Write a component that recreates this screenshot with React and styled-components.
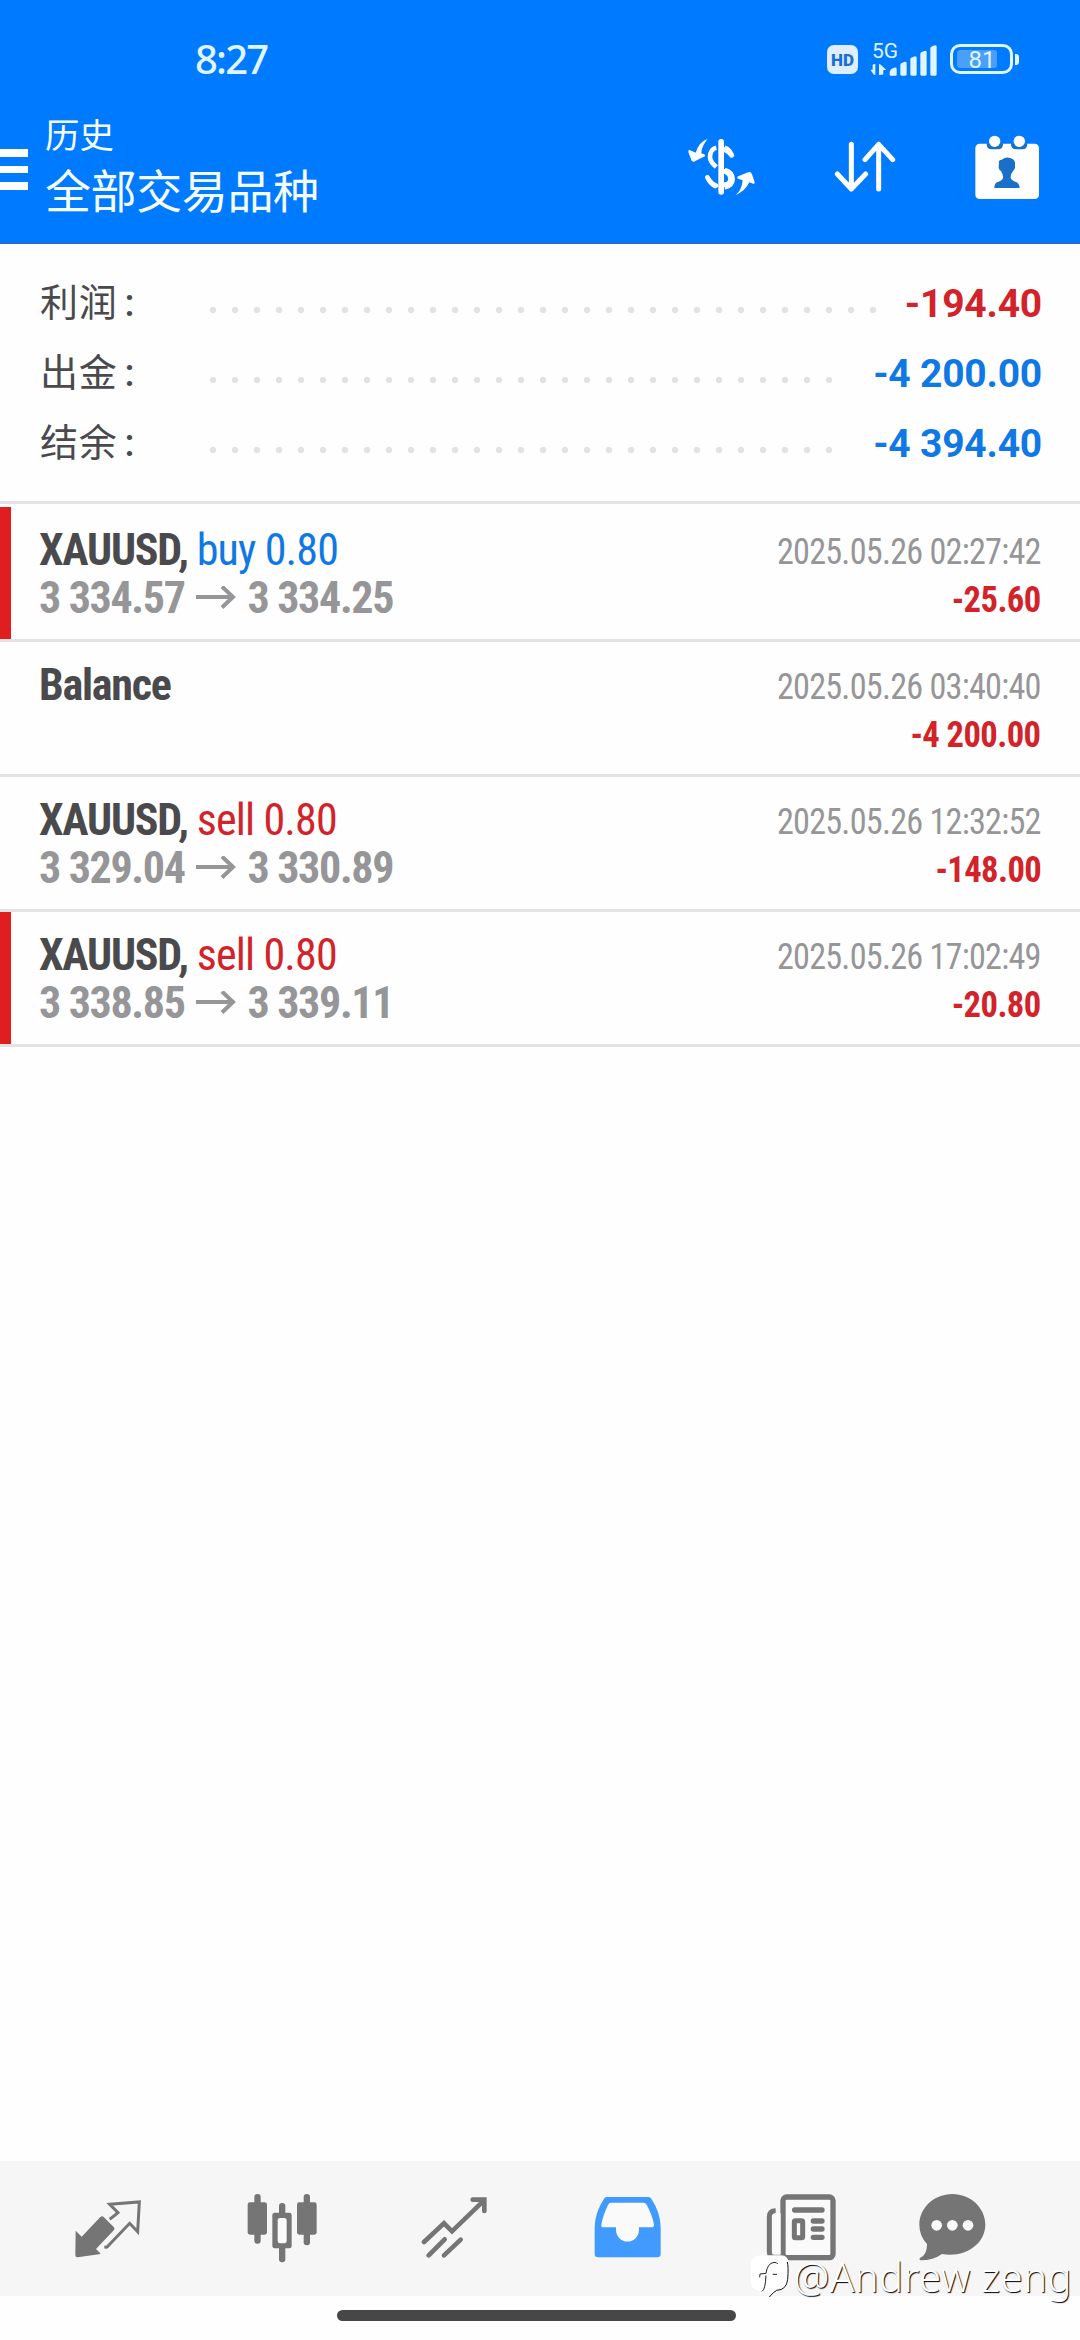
import styled, { createGlobalStyle } from 'styled-components';

const GlobalStyle = createGlobalStyle`
  * {
    box-sizing: border-box;
  }

  body {
    margin: 0;
    background: #ffffff;
    font-family: Roboto, 'Noto Sans CJK SC', sans-serif;
  }

  svg {
    display: block;
    flex: none;
  }
`;

const Screen = styled.div`
  position: relative;
  display: flex;
  flex-direction: column;
  width: 1080px;
  height: 2340px;
  overflow: hidden;
  background: #fefefe;
`;

const Header = styled.header`
  height: 244px;
  background: #007aff;
  border-bottom: 2px solid #1b6fd0;
  color: #f4fdff;
`;

const StatusBar = styled.div`
  display: flex;
  align-items: center;
  justify-content: space-between;
  height: 118px;
  padding: 0 61px 0 195px;
  color: #dff5ff;
`;

const Clock = styled.span`
  font-family: 'Noto Sans', sans-serif;
  font-size: 40px;
  font-weight: 500;
  line-height: 118px;
  letter-spacing: -1.8px;
`;

const StatusIcons = styled.div`
  display: flex;
  align-items: center;
`;

const HdBadge = styled.span`
  width: 31px;
  height: 29px;
  margin-right: 12px;
  border-radius: 7px;
  background: #dfeeff;
  color: #1a6fd4;
  font-size: 17px;
  font-weight: 900;
  line-height: 30px;
  text-align: center;
`;

const Network = styled.div`
  position: relative;
  width: 68px;
  height: 34px;
  margin-right: 12px;
`;

const NetworkType = styled.span`
  position: absolute;
  left: 2px;
  top: -3px;
  font-size: 21px;
  line-height: 24px;
`;

const Battery = styled.div`
  position: relative;
  width: 63px;
  height: 30px;
  padding: 3px 4px;
  border: 3px solid #dff5ff;
  border-radius: 10px;
`;

const BatteryFill = styled.div`
  width: 40px;
  height: 18px;
  border-radius: 3px;
  background: #4a9ffb;
`;

const BatteryLevel = styled.span`
  position: absolute;
  left: 0;
  top: 0;
  width: 58px;
  font-size: 24px;
  line-height: 26px;
  text-align: center;
`;

const BatteryTip = styled.div`
  width: 4px;
  height: 11px;
  margin-left: 2px;
  border-radius: 0 3px 3px 0;
  background: #dff5ff;
`;

const TitleBar = styled.div`
  display: flex;
  height: 124px;
`;

const MenuButton = styled.div`
  display: flex;
  flex-direction: column;
  gap: 9px;
  width: 28px;
  margin-top: 31px;
`;

const MenuLine = styled.div`
  height: 7.5px;
  background: #ffffff;
`;

const Titles = styled.div`
  flex: 1;
  padding: 1px 0 0 17px;
`;

const Caption = styled.div`
  height: 34px;
  font-size: 34.5px;
  line-height: 34px;
`;

const Title = styled.h1`
  margin: 11px 0 0;
  font-size: 46px;
  font-weight: 400;
  line-height: 56px;
  letter-spacing: -0.4px;
`;

const Actions = styled.div`
  display: flex;
  align-items: center;
  gap: 79px;
  height: 98px;
  padding-right: 41px;
`;

const Summary = styled.section`
  height: 257px;
  padding: 23px 38px 0 40px;
`;

const SummaryRow = styled.div`
  display: flex;
  align-items: center;
  height: 70px;
`;

const SummaryLabel = styled.span`
  width: 162px;
  padding-bottom: 5px;
  color: #4a4a4d;
  font-size: 38px;
  letter-spacing: 0.8px;
`;

const Colon = styled.span`
  margin-left: 7px;
  font-weight: 500;
`;

const SummaryLeader = styled.div`
  flex: 1;
  margin-right: 18px;
`;

/* whole 22px cells only, so a dot is never cut in half */
const Dots = styled.div`
  width: round(down, 100%, 22px);
  height: 8px;
  margin-top: 16px;
  background: radial-gradient(circle, #e2e2e2 2.8px, transparent 3.6px) 0 0 / 22px 8px repeat-x;
`;

const SummaryValue = styled.span`
  padding-top: 3px;
  color: ${(props) => (props.$loss ? '#d2232a' : '#0f78e4')};
  font-size: 39px;
  font-weight: 700;
  letter-spacing: -0.2px;
`;

const List = styled.ul`
  margin: 0;
  padding: 0;
  border-top: 3px solid #e3e3e3;
  list-style: none;
`;

const Deal = styled.li`
  display: flex;
  justify-content: space-between;
  height: 135px;
  padding: 17px 39px 0;
  border-bottom: 3px solid #e3e3e3;
  box-shadow: ${(props) => (props.$marked ? 'inset 11px 0 0 #e01e1f' : 'none')};
  font-family: 'Roboto Condensed', Roboto, sans-serif;
  font-stretch: 75%;

  &:first-child {
    margin-top: 3px;
  }
`;

const DealSide = styled.div`
  display: flex;
  flex-direction: column;
  align-items: ${(props) => (props.$end ? 'flex-end' : 'flex-start')};
`;

const Symbol = styled.div`
  color: #4a4a4d;
  font-size: 44px;
  font-weight: 700;
  line-height: 52px;
  letter-spacing: -1.25px;
`;

const Side = styled.span`
  color: ${(props) => (props.$type === 'buy' ? '#0f78e4' : '#d2232a')};
  font-weight: 400;
  letter-spacing: -0.85px;
`;

const Prices = styled.div`
  display: flex;
  align-items: center;
  gap: 11.5px;
  margin-top: -4px;
  color: #969698;
  font-size: 44px;
  font-weight: 700;
  line-height: 52px;
  letter-spacing: -1.35px;
`;

const Time = styled.div`
  color: #969698;
  font-size: 36px;
  line-height: 57px;
  letter-spacing: -0.8px;
  transform: scaleX(0.95);
  transform-origin: right;
`;

const Profit = styled.div`
  margin-top: -9px;
  color: #d2232a;
  font-size: 36px;
  font-weight: 700;
  line-height: 57px;
  letter-spacing: -0.6px;
  transform: scaleX(0.96);
  transform-origin: right;
`;

const Spacer = styled.div`
  flex: 1;
`;

const TabBar = styled.nav`
  display: flex;
  height: 135px;
  padding-left: 22px;
  background: #f6f6f6;
  color: #757575;
`;

const Tab = styled.div`
  display: flex;
  justify-content: center;
  width: ${(props) => props.$width || 173}px;
  padding-top: 32px;
  color: ${(props) => (props.$active ? '#419bff' : 'inherit')};
`;

const HomeArea = styled.div`
  display: flex;
  justify-content: center;
  height: 44px;
  padding: 14px 7px 0 0;
`;

const HomeIndicator = styled.div`
  width: 399px;
  height: 11px;
  border-radius: 6px;
  background: #474747;
`;

const Watermark = styled.div`
  position: absolute;
  right: 8px;
  bottom: 35px;
  display: flex;
  align-items: center;
  color: #ffffff;
  font-family: 'Noto Sans', sans-serif;
  font-size: 40px;
  font-weight: 300;
  line-height: 56px;
  letter-spacing: 0.5px;
  text-shadow: 1px 1px 1px #000000;
  white-space: nowrap;
`;

const SignalIcon = () => (
  <svg width="68" height="34" viewBox="624 124 204 102" fill="currentColor">
    <path d="M640 190v33q-4 0-6-3l-9-13h7v-14q0-3 8-3zM651 223v-33q3 0 6 3l16 15h-9v11q0 3-4 3z" />
    <path d="M683 222v-7q0-10 14-14 7-1 7 4v17q0 3-3 3h-15q-3 0-3-3z" />
    <path d="M715 221v-29q0-4 6-6l8-3q5 0 5 4v34q0 4-4 4h-11q-4 0-4-4z" />
    <path d="M745 221v-45q0-5 6-6l8-3q5 0 5 4v50q0 4-4 4h-11q-4 0-4-4z" />
    <path d="M775 221v-62q0-5 6-6l8-3q5 0 5 4v67q0 4-4 4h-11q-4 0-4-4z" />
    <path d="M805 221v-78q0-5 6-6l8-3q5 0 5 4v83q0 4-4 4h-11q-4 0-4-4z" />
  </svg>
);

const DollarIcon = () => (
  <svg width="67" height="58" viewBox="86 414 201 174" fill="none">
    <path d="M171 443Q152 447 152 472Q152 486 171 501M196 443Q211 447 219 470M145 533Q154 553 171 560M196 510Q220 517 220 538Q218 559 196 562" stroke="#fff" strokeWidth="14" />
    <path d="M196 449Q208 455 217 466M196 514Q217 522 213 542Q209 554 196 554M144 532Q152 549 170 557" stroke="#fff" strokeWidth="14" strokeLinecap="round" />
    <rect x="177" y="417" width="17" height="167" rx="8" fill="#fff" />
    <path d="M145 417Q120 424 109 458L91 450Q86 450 87 456L97 482Q103 489 112 481L137 469Q139 464 134 463L126 460Q127 437 145 417z" fill="#fff" />
    <path d="M229 585Q247 572 250 541L236 536Q231 532 237 529L266 517Q274 513 278 523L286 547Q286 553 281 551L270 547Q258 573 229 585z" fill="#fff" />
  </svg>
);

const SortIcon = () => (
  <svg width="62" height="52" viewBox="522 424 186 156" fill="none" stroke="#fff" strokeWidth="15" strokeLinecap="round" strokeLinejoin="round">
    <path d="M574 434V568M532 523L574 568L617 523M656 568V434M615 480L656 434L698 480" />
  </svg>
);

const CalendarIcon = () => (
  <svg width="64" height="65" viewBox="944 400 192 195">
    <rect x="945" y="426" width="191" height="166" rx="13" fill="#fff" />
    <path d="M979 425h49v3q0 15-15 15h-19q-15 0-15-15zM1052 425h49v3q0 15-15 15h-19q-15 0-15-15z" fill="#1a6fc8" />
    <circle cx="1003" cy="419" r="17" fill="#fff" />
    <circle cx="1077" cy="419" r="17" fill="#fff" />
    <path d="M1002 559Q1002 544 1012 541Q1026 537 1028 528Q1029 519 1022 508Q1017 506 1015 498L1016 478Q1020 474 1024 474Q1040 462 1057 472Q1064 476 1064 484L1064 498Q1062 505 1058 508Q1050 518 1051 528Q1054 537 1067 541Q1077 545 1078 559z" fill="#1a6fc8" />
  </svg>
);

const ArrowIcon = () => (
  <svg width="40" height="24" viewBox="0 0 40 24" fill="none" stroke="currentColor" strokeWidth="4">
    <path d="M0 11H37M26 0.5L37 11L26 21.5" />
  </svg>
);

const QuotesIcon = () => (
  <svg width="67" height="70" viewBox="46 38 201 210">
    <path d="M48 151L66 169L122 110Q127 106 132 110L163 141Q166 145 163 149L109 206L122 219Q123 222 118 222L54 231Q47 231 47 225z" fill="currentColor" />
    <path d="M150 117Q161 109 175 97L150 72L239 65L234 154L210 129L142 200L134 201" fill="none" stroke="currentColor" strokeWidth="9" />
  </svg>
);

const CandlesIcon = () => (
  <svg width="70" height="70" viewBox="558 38 210 210" fill="currentColor">
    <rect x="580" y="41" width="19" height="149" rx="9" />
    <rect x="560" y="66" width="58" height="97" rx="7" />
    <rect x="728" y="41" width="19" height="154" rx="9" />
    <rect x="708" y="66" width="59" height="97" rx="7" />
    <rect x="654" y="68" width="19" height="178" rx="9" />
    <rect x="634" y="97" width="58" height="107" rx="7" />
    <rect x="650" y="113" width="27" height="76" rx="7" fill="#fafafa" />
  </svg>
);

const TradeIcon = () => (
  <svg width="67" height="70" viewBox="1083 38 201 210" fill="none" stroke="currentColor" strokeWidth="14" strokeLinecap="round">
    <path d="M1092 185L1152 129L1176 153L1272 60M1238 58H1273V92" />
    <path d="M1106 225L1154 177M1152 225L1202 178" />
  </svg>
);

const HistoryIcon = () => (
  <svg width="67" height="70" viewBox="42 38 201 210">
    <path d="M80 50H206Q211 50 214 55Q242 98 242 141V221Q242 231 232 231H54Q44 231 44 221V141Q44 98 72 55Q75 50 80 50z" fill="currentColor" />
    <path d="M94 67H190Q197 67 200 73Q218 107 222 133Q222 141 214 141H177V149A34 34 0 0 1 108 149V141H70Q63 141 64 133Q68 107 84 74Q87 67 94 67z" fill="#fafafa" />
  </svg>
);

const NewsIcon = () => (
  <svg width="70" height="70" viewBox="558 38 210 210" fill="none" stroke="currentColor">
    <rect x="609" y="50" width="150" height="182" rx="11" strokeWidth="16" fill="#fafafa" />
    <path d="M587 91Q568 91 568 109V214Q568 231 584 231H612" strokeWidth="15" />
    <path d="M577 108Q578 99 588 99H602V222H583Q577 222 577 214z" fill="#fafafa" stroke="none" />
    <path d="M644 89H726M700 122H726M700 146H726M700 171H726" strokeWidth="16" strokeLinecap="round" />
    <rect x="643" y="121" width="25" height="51" rx="3" strokeWidth="15" />
  </svg>
);

const ChatIcon = () => (
  <svg width="67" height="70" viewBox="1019 38 201 210">
    <path d="M1119 41C1174 41 1218 83 1218 133C1218 190 1158 233 1088 221Q1062 240 1024 240Q1018 238 1022 233Q1044 222 1043 191Q1020 166 1020 133C1020 83 1064 41 1119 41z" fill="currentColor" />
    <circle cx="1072" cy="135" r="16" fill="#fafafa" />
    <circle cx="1119" cy="135" r="16" fill="#fafafa" />
    <circle cx="1166" cy="135" r="16" fill="#fafafa" />
  </svg>
);

const WatermarkLogo = () => (
  <svg width="44" height="46" viewBox="26 28 132 138" fill="none">
    <path d="M60 32H118Q142 32 142 58V100Q142 136 112 138L86 156Q84 140 70 140H60Q28 138 28 106V66Q28 32 60 32z" fill="#fff" />
    <path d="M138 52Q142 66 139 104Q136 136 106 137Q96 142 84 157" stroke="#111" strokeWidth="3" />
    <path d="M55 98L56 88L74 86Q78 56 98 53Q107 53 109 58M62 140Q72 136 74 92M94 89H107" stroke="#222" strokeWidth="3" />
  </svg>
);

const totals = [
  { label: '利润', value: '-194.40', loss: true },
  { label: '出金', value: '-4 200.00' },
  { label: '结余', value: '-4 394.40' },
];

const deals = [
  {
    symbol: 'XAUUSD',
    type: 'buy',
    volume: '0.80',
    open: '3 334.57',
    close: '3 334.25',
    time: '2025.05.26 02:27:42',
    profit: '-25.60',
    marked: true,
  },
  {
    symbol: 'Balance',
    time: '2025.05.26 03:40:40',
    profit: '-4 200.00',
  },
  {
    symbol: 'XAUUSD',
    type: 'sell',
    volume: '0.80',
    open: '3 329.04',
    close: '3 330.89',
    time: '2025.05.26 12:32:52',
    profit: '-148.00',
  },
  {
    symbol: 'XAUUSD',
    type: 'sell',
    volume: '0.80',
    open: '3 338.85',
    close: '3 339.11',
    time: '2025.05.26 17:02:49',
    profit: '-20.80',
    marked: true,
  },
];

function DealRow({ deal }) {
  return (
    <Deal $marked={deal.marked}>
      <DealSide>
        <Symbol>
          {deal.symbol}
          {deal.type && (
            <>
              {', '}
              <Side $type={deal.type}>
                {deal.type} {deal.volume}
              </Side>
            </>
          )}
        </Symbol>
        {deal.open && (
          <Prices>
            <span>{deal.open}</span>
            <ArrowIcon />
            <span>{deal.close}</span>
          </Prices>
        )}
      </DealSide>
      <DealSide $end>
        <Time>{deal.time}</Time>
        <Profit>{deal.profit}</Profit>
      </DealSide>
    </Deal>
  );
}

function App() {
  return (
    <>
      <GlobalStyle />
      <Screen>
        <Header>
          <StatusBar>
            <Clock>8:27</Clock>
            <StatusIcons>
              <HdBadge>HD</HdBadge>
              <Network>
                <NetworkType>5G</NetworkType>
                <SignalIcon />
              </Network>
              <Battery>
                <BatteryFill />
                <BatteryLevel>81</BatteryLevel>
              </Battery>
              <BatteryTip />
            </StatusIcons>
          </StatusBar>
          <TitleBar>
            <MenuButton>
              <MenuLine />
              <MenuLine />
              <MenuLine />
            </MenuButton>
            <Titles>
              <Caption>历史</Caption>
              <Title>全部交易品种</Title>
            </Titles>
            <Actions>
              <DollarIcon />
              <SortIcon />
              <CalendarIcon />
            </Actions>
          </TitleBar>
        </Header>

        <Summary>
          {totals.map((total) => (
            <SummaryRow key={total.label}>
              <SummaryLabel>
                {total.label}
                <Colon>:</Colon>
              </SummaryLabel>
              <SummaryLeader>
                <Dots />
              </SummaryLeader>
              <SummaryValue $loss={total.loss}>{total.value}</SummaryValue>
            </SummaryRow>
          ))}
        </Summary>

        <List>
          {deals.map((deal) => (
            <DealRow key={deal.time} deal={deal} />
          ))}
        </List>

        <Spacer />

        <TabBar>
          <Tab>
            <QuotesIcon />
          </Tab>
          <Tab>
            <CandlesIcon />
          </Tab>
          <Tab>
            <TradeIcon />
          </Tab>
          <Tab $active>
            <HistoryIcon />
          </Tab>
          <Tab>
            <NewsIcon />
          </Tab>
          <Tab $width={131}>
            <ChatIcon />
          </Tab>
        </TabBar>
        <HomeArea>
          <HomeIndicator />
        </HomeArea>

        <Watermark>
          <WatermarkLogo />
          @Andrew zeng
        </Watermark>
      </Screen>
    </>
  );
}

export default App;
